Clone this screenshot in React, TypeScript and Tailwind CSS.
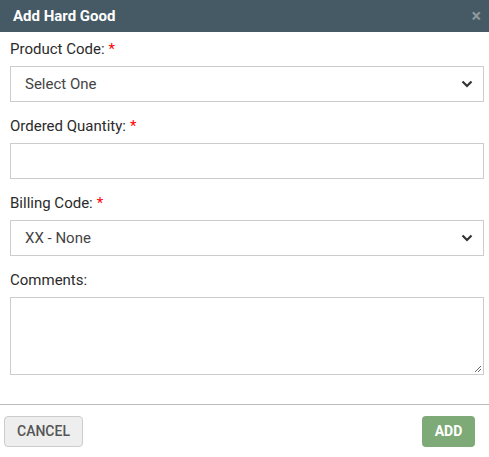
import React from "react";

const Label = ({ text, req }: { text: string; req?: boolean }) => (
  <div className="h-[20px] leading-[20px] text-[15px] font-normal text-[#2b2b2b] mb-[7px]">
    {text}
    {req && <span className="text-[#ff0000] ml-[4px]">*</span>}
  </div>
);

const Chevron = () => (
  <svg
    className="absolute right-[10px] top-1/2 -translate-y-1/2 pointer-events-none"
    width="12"
    height="8"
    viewBox="0 0 12 8"
  >
    <path d="M1.5 1.5 L6 6 L10.5 1.5" fill="none" stroke="#333" strokeWidth="2.2" />
  </svg>
);

const Select = ({ value }: { value: string }) => (
  <div className="relative h-[36px] border border-[#cccccc] bg-white flex items-center pl-[14px] text-[15px] text-[#444]">
    {value}
    <Chevron />
  </div>
);

export default function App() {
  return (
    <div
      className="w-[489px] h-[457px] bg-white flex flex-col"
      style={{ fontFamily: "Roboto, 'Liberation Sans', sans-serif" }}
    >
      <div className="h-[32px] bg-[#455a64] flex items-center justify-between pl-[13px] pr-[8px]">
        <span className="text-white font-bold text-[15px]">Add Hard Good</span>
        <span className="text-[#8d979c] font-bold text-[18px] leading-none">×</span>
      </div>
      <div className="pt-[7px] px-[10px] pr-[5px] flex flex-col">
        <Label text="Product Code:" req />
        <Select value="Select One" />
        <div className="h-[14px]" />
        <Label text="Ordered Quantity:" req />
        <div className="h-[36px] border border-[#cccccc] bg-white" />
        <div className="h-[14px]" />
        <Label text="Billing Code:" req />
        <Select value="XX - None" />
        <div className="h-[14px]" />
        <Label text="Comments:" />
        <div className="relative h-[78px] border border-[#cccccc] bg-white">
          <svg className="absolute right-[1px] bottom-[1px]" width="9" height="9" viewBox="0 0 9 9">
            <path d="M8 2 L2 8 M8 5 L5 8" stroke="#666" strokeWidth="1" />
          </svg>
        </div>
      </div>
      <div className="mt-[29px] border-t border-[#bbbbbb] flex items-start justify-between pt-[11px] pl-[4px] pr-[14px]">
        <button className="h-[31px] w-[79px] bg-[#eeeeee] border border-[#cccccc] rounded-[4px] text-[#555] text-[14px] font-medium">
          CANCEL
        </button>
        <button className="h-[31px] w-[53px] bg-[#7daa76] rounded-[4px] text-white text-[14px] font-bold">
          ADD
        </button>
      </div>
    </div>
  );
}
